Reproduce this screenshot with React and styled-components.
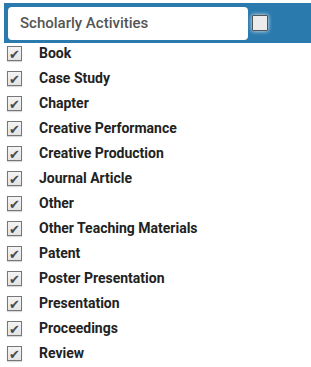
import React from "react";
import styled, { createGlobalStyle } from "styled-components";

const Global = createGlobalStyle`
  html, body { margin: 0; padding: 0; background: #fff; }
  body { font-family: Roboto, "Liberation Sans", sans-serif; }
`;

const Page = styled.div`
  width: 311px;
  height: 367px;
  overflow: hidden;
`;

const Header = styled.div`
  margin: 3px 0 0 4px;
  height: 40px;
  background: #2a7aae;
  display: flex;
  align-items: center;
  padding-left: 4px;
  gap: 4px;
  box-sizing: border-box;
`;

const Search = styled.div`
  width: 240px;
  height: 33px;
  background: #fff;
  border-radius: 4px;
  box-sizing: border-box;
  padding-left: 12px;
  display: flex;
  align-items: center;
  font-size: 15px;
  font-weight: 500;
  color: #555;
`;

const SelectAll = styled.div`
  width: 16px;
  height: 16px;
  box-sizing: border-box;
  background: #ececec;
  border: 1.5px solid #555;
  border-radius: 1px;
  box-shadow: 0 0 4px rgba(255, 255, 255, 0.9);
`;

const List = styled.ul`
  list-style: none;
  margin: 0;
  padding: 3px 0 0 7px;
`;

const Row = styled.li`
  height: 25px;
  display: flex;
  align-items: flex-start;
  gap: 17px;
`;

const Box = styled.span`
  width: 15px;
  height: 15px;
  box-sizing: border-box;
  border: 1px solid #777;
  background: linear-gradient(#f4f4f4, #e4e4e4);
  box-shadow: 0 1px 1px rgba(0, 0, 0, 0.15);
  display: flex;
  align-items: center;
  justify-content: center;
  color: #4a4a4a;
  font-family: "DejaVu Sans", sans-serif;
  font-size: 13px;
  line-height: 1;
  padding-top: 2px;
`;

const Label = styled.span`
  font-size: 14px;
  font-weight: 700;
  color: #222;
  line-height: 15px;
`;

const items = [
  "Book",
  "Case Study",
  "Chapter",
  "Creative Performance",
  "Creative Production",
  "Journal Article",
  "Other",
  "Other Teaching Materials",
  "Patent",
  "Poster Presentation",
  "Presentation",
  "Proceedings",
  "Review",
];

export default function App() {
  return (
    <Page>
      <Global />
      <Header>
        <Search>Scholarly Activities</Search>
        <SelectAll />
      </Header>
      <List>
        {items.map((t) => (
          <Row key={t}>
            <Box>✔</Box>
            <Label>{t}</Label>
          </Row>
        ))}
      </List>
    </Page>
  );
}
